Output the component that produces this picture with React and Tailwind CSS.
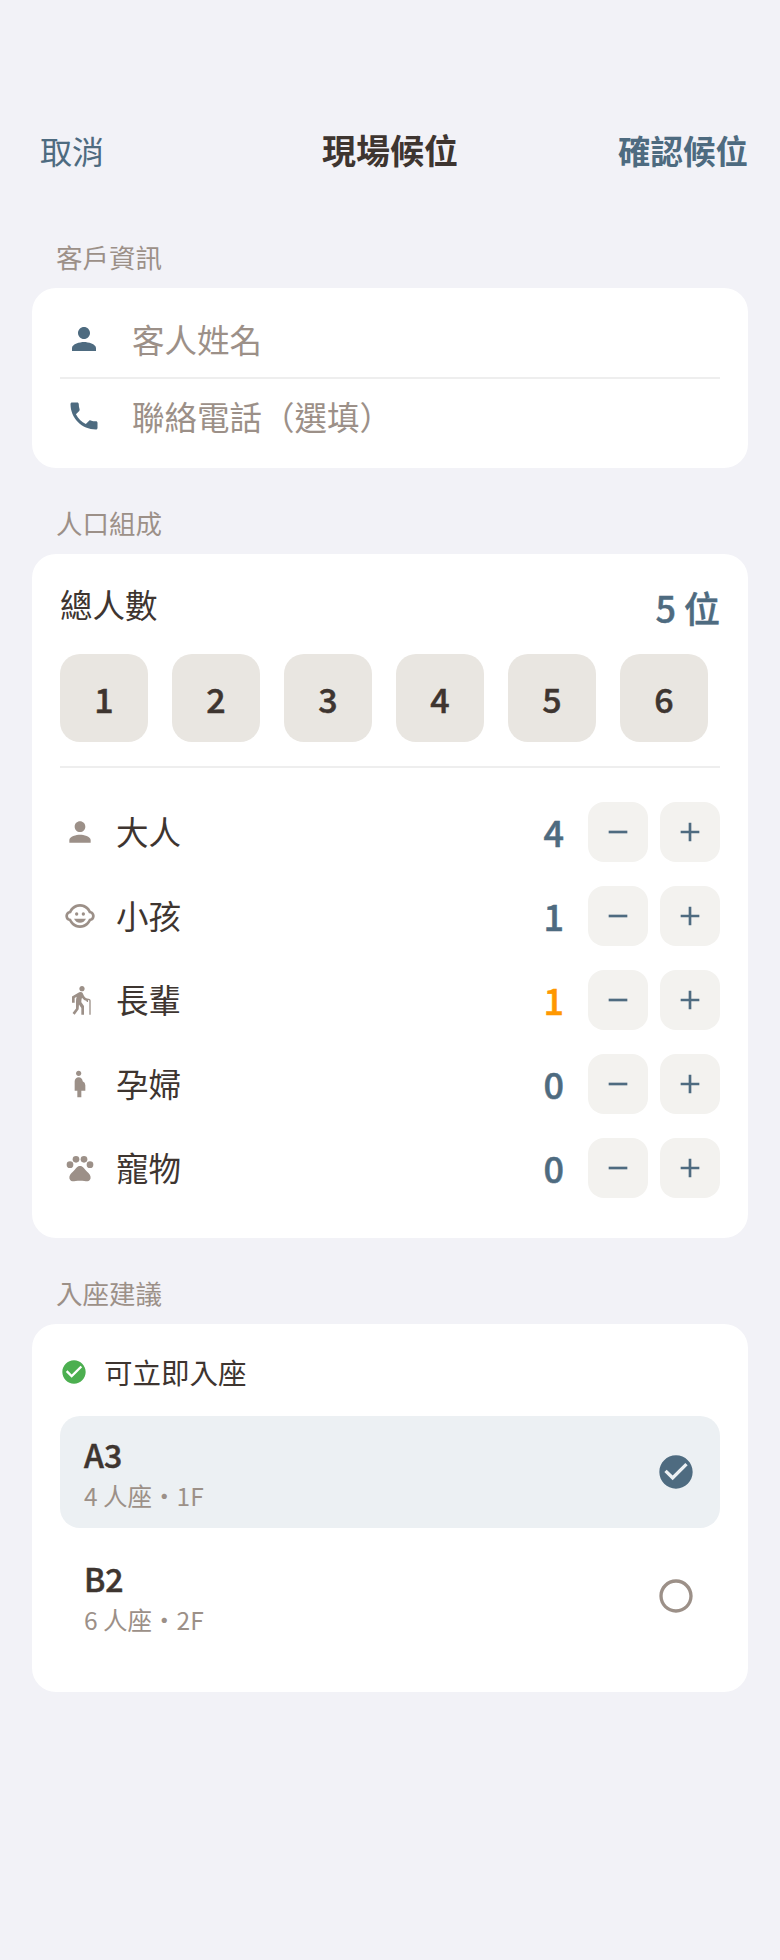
import {
  MdPerson,
  MdPhone,
  MdChildCare,
  MdElderly,
  MdPregnantWoman,
  MdPets,
  MdRemove,
  MdAdd,
  MdCheckCircle,
  MdRadioButtonUnchecked,
} from "react-icons/md";

const people = [
  { label: "大人", count: 4, Icon: MdPerson },
  { label: "小孩", count: 1, Icon: MdChildCare },
  { label: "長輩", count: 1, Icon: MdElderly, warn: true },
  { label: "孕婦", count: 0, Icon: MdPregnantWoman },
  { label: "寵物", count: 0, Icon: MdPets },
];

function SectionLabel({ children, className }) {
  return (
    <div className={`pl-[24px] text-[26.5px] leading-[36px] text-[#9c9088] ${className || ""}`}>
      {children}
    </div>
  );
}

function PersonRow({ label, count, Icon, warn }) {
  return (
    <div className="flex items-center h-[60px]">
      <Icon className="ml-[4px] text-[#9c9088]" size={32} />
      <span className="ml-[20px] flex-1 text-[32.5px] leading-[44px] text-[#3e3530] -translate-y-px">{label}</span>
      <span className={`mr-[24px] text-[36px] leading-[44px] font-medium [-webkit-text-stroke:0.5px] -translate-y-px ${warn ? "text-[#ff9800]" : "text-[#4e6b80]"}`}>
        {count}
      </span>
      <button className="flex items-center justify-center w-[60px] h-[60px] rounded-[16px] bg-[#f3f2ef] text-[#4e6b80]">
        <MdRemove size={32} />
      </button>
      <button className="ml-[12px] flex items-center justify-center w-[60px] h-[60px] rounded-[16px] bg-[#f3f2ef] text-[#4e6b80]">
        <MdAdd size={32} />
      </button>
    </div>
  );
}

function TableRow({ name, info, selected }) {
  return (
    <div className={`flex items-center justify-between h-[112px] pl-[24px] pr-[24px] rounded-[20px] ${selected ? "bg-[#ecf0f3]" : ""}`}>
      <div>
        <div className="text-[32px] leading-[44px] font-medium [-webkit-text-stroke:0.5px] text-[#3e3530]">{name}</div>
        <div className="mt-[3px] text-[24.5px] leading-[34px] text-[#9c9088]">{info}</div>
      </div>
      {selected ? (
        <MdCheckCircle className="text-[#4e6b80]" size={40} />
      ) : (
        <MdRadioButtonUnchecked className="text-[#9c9088]" size={40} />
      )}
    </div>
  );
}

export default function App() {
  return (
    <div className="w-[780px] h-[1960px] bg-[#f2f2f7] font-['Noto_Sans_CJK_TC',sans-serif] overflow-hidden">
      {/* header */}
      <div className="flex items-center pt-[119px] px-[32px] h-[181px]">
        <div className="flex-1 pl-[8px] text-[32px] leading-[44px] text-[#4e6b80]">取消</div>
        <div className="text-[34px] leading-[44px] font-bold text-[#3e3530]">現場候位</div>
        <div className="flex-1 pl-[8px] text-right text-[32.5px] leading-[44px] font-bold text-[#4e6b80]">確認候位</div>
      </div>

      <div className="px-[32px] pt-[58px]">
        <SectionLabel className="mb-[13px]">客戶資訊</SectionLabel>
        <div className="bg-white rounded-[24px] px-[28px]">
          <div className="flex items-center h-[91px] pt-[15px] border-b-2 border-[#eeeeee]">
            <MdPerson className="ml-[6px] -translate-y-px text-[#4e6b80]" size={36} />
            <span className="ml-[30px] text-[32.5px] leading-[44px] text-[#9c9088] -translate-y-px">客人姓名</span>
          </div>
          <div className="flex items-center h-[89px] pb-[14px]">
            <MdPhone className="ml-[6px] -translate-y-px text-[#4e6b80]" size={36} />
            <span className="ml-[30px] text-[32.5px] leading-[44px] text-[#9c9088] -translate-y-px">聯絡電話（選填）</span>
          </div>
        </div>

        <SectionLabel className="mt-[37px] mb-[13px]">人口組成</SectionLabel>
        <div className="bg-white rounded-[24px] px-[28px] pt-[28px] pb-[40px]">
          <div className="flex items-center justify-between h-[44px]">
            <span className="text-[32.5px] leading-[44px] text-[#3e3530]">總人數</span>
            <span className="text-[36px] leading-[44px] font-medium [-webkit-text-stroke:0.5px] text-[#4e6b80] translate-y-[3px]">5 位</span>
          </div>
          <div className="flex gap-[24px] mt-[28px]">
            {[1, 2, 3, 4, 5, 6].map((n) => (
              <button
                key={n}
                className="flex items-center justify-center w-[88px] h-[88px] rounded-[20px] bg-[#e9e6e1] text-[34px] font-medium [-webkit-text-stroke:0.5px] text-[#3e3530]"
              >
                {n}
              </button>
            ))}
          </div>
          <div className="mt-[24px] mb-[34px] h-[2px] bg-[#eeeeee]" />
          <div className="flex flex-col gap-[24px]">
            {people.map((p) => (
              <PersonRow key={p.label} {...p} />
            ))}
          </div>
        </div>

        <SectionLabel className="mt-[37px] mb-[13px]">入座建議</SectionLabel>
        <div className="bg-white rounded-[24px] px-[28px] pt-[28px] pb-[40px]">
          <div className="flex items-center h-[40px] mb-[24px]">
            <MdCheckCircle className="text-[#4caf50]" size={28} />
            <span className="ml-[16px] text-[28.5px] leading-[40px] text-[#3e3530]">可立即入座</span>
          </div>
          <div className="flex flex-col gap-[12px]">
            <TableRow name="A3" info="4 人座•1F" selected />
            <TableRow name="B2" info="6 人座•2F" />
          </div>
        </div>
      </div>
    </div>
  );
}
